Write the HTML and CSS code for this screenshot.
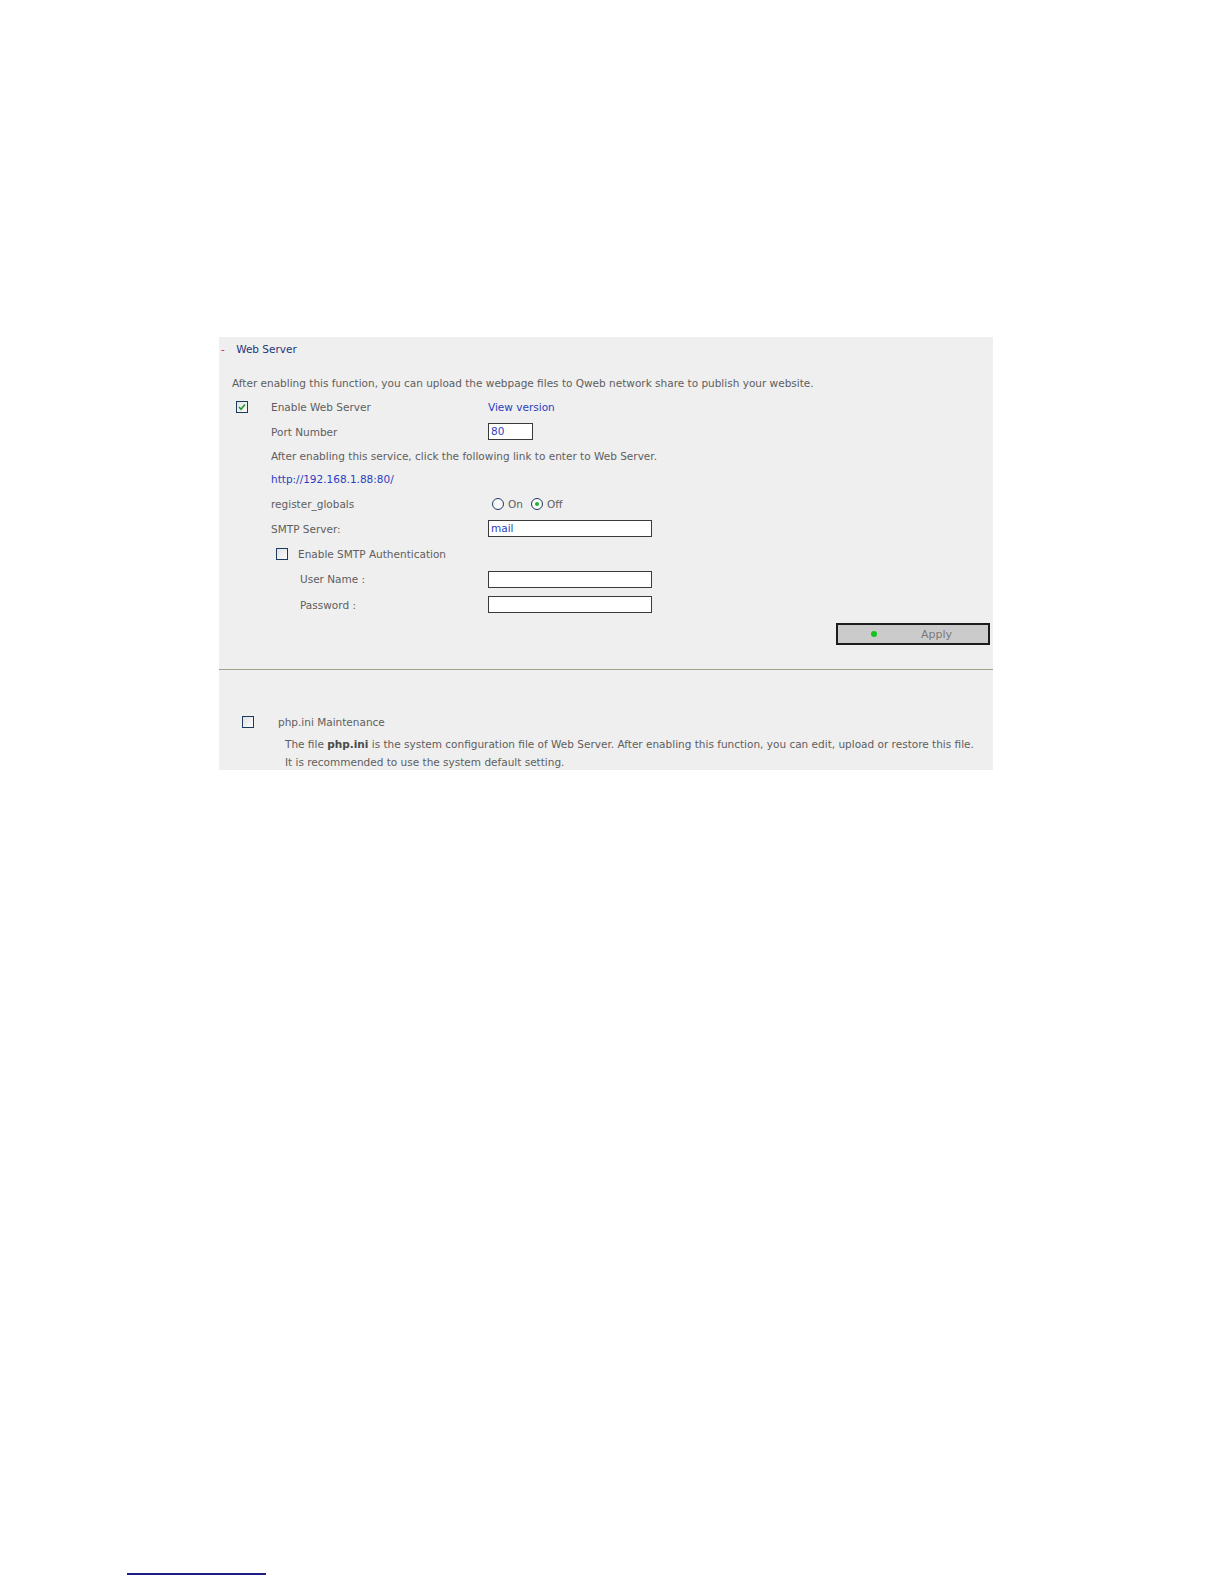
FILE: index.html
```html
<!DOCTYPE html>
<html lang="en">
<head>
    <meta charset="UTF-8">
    <title>Web Server</title>
    <link rel="stylesheet" href="styles.css">
</head>
<body>
    <div class="page">
        <div class="panel">
            <div class="title"><span class="dash">-</span> Web Server</div>
            <div class="intro">After enabling this function, you can upload the webpage files to Qweb network share to publish your website.</div>

            <div class="form">
                <div class="row h24">
                    <span class="check"><svg width="8" height="8" viewBox="0 0 8 8"><path d="M1 4 L3 6.2 L7 1.5" fill="none" stroke="#1f9a2a" stroke-width="1.6"/></svg></span>
                    <span class="label">Enable Web Server</span>
                    <a class="link">View version</a>
                </div>
                <div class="row h25">
                    <span></span>
                    <span class="label">Port Number</span>
                    <span class="input short">80</span>
                </div>
                <div class="row h23">
                    <span></span>
                    <span class="label wide">After enabling this service, click the following link to enter to Web Server.</span>
                </div>
                <div class="row h24">
                    <span></span>
                    <a class="link wide">http://192.168.1.88:80/</a>
                </div>
                <div class="row h25">
                    <span></span>
                    <span class="label">register_globals</span>
                    <span class="radios">
                        <span class="radio"></span><span class="opt">On</span>
                        <span class="radio on"></span><span class="opt">Off</span>
                    </span>
                </div>
                <div class="row h25">
                    <span></span>
                    <span class="label">SMTP Server:</span>
                    <span class="input">mail</span>
                </div>
                <div class="row h25 sub">
                    <span class="check"></span>
                    <span class="label">Enable SMTP Authentication</span>
                </div>
                <div class="row h26 sub2">
                    <span class="label">User Name :</span>
                    <span class="input"></span>
                </div>
                <div class="row h25 sub2">
                    <span class="label">Password :</span>
                    <span class="input"></span>
                </div>
            </div>

            <div class="actions">
                <button class="apply"><span class="dot"></span><span class="apply-text">Apply</span></button>
            </div>

            <div class="php">
                <div class="php-head">
                    <span class="check"></span>
                    <span class="label">php.ini Maintenance</span>
                </div>
                <div class="php-desc">
                    <div>The file <b>php.ini</b> is the system configuration file of Web Server. After enabling this function, you can edit, upload or restore this file.</div>
                    <div>It is recommended to use the system default setting.</div>
                </div>
            </div>
        </div>

        <div class="footnote"></div>
    </div>
</body>
</html>
```

FILE: styles.css
```css
html, body {
    margin: 0;
    padding: 0;
    overflow: hidden;
}

body {
    background: #ffffff;
    font-family: 'DejaVu Sans', Tahoma, sans-serif;
    font-size: 10.5px;
    color: #5e5e5e;
}

.page {
    height: 1584px;
    overflow: hidden;
    padding-top: 337px;
    box-sizing: border-box;
}

.panel {
    margin-left: 219px;
    width: 774px;
    height: 433px;
    background: #efefef;
    overflow: hidden;
}

.title {
    height: 24px;
    line-height: 24px;
    padding-left: 2px;
    color: #25357a;
    font-size: 10.5px;
}

.dash {
    color: #d0202a;
    margin-right: 8px;
}

.intro {
    margin-top: 10px;
    height: 24px;
    line-height: 24px;
    padding-left: 13px;
}

.form {
    padding-left: 17px;
}

.row {
    display: grid;
    grid-template-columns: 35px 217px auto;
    align-items: center;
}

.h23 { height: 23px; }
.h24 { height: 24px; }
.h25 { height: 25px; }
.h26 { height: 26px; }

.row.sub {
    grid-template-columns: 22px auto;
    padding-left: 40px;
}

.row.sub2 {
    grid-template-columns: 188px auto;
    padding-left: 64px;
}

.wide {
    grid-column: 2 / 4;
}

.link {
    color: #2a3fc0;
    text-decoration: none;
}

.check {
    width: 10px;
    height: 10px;
    border: 1px solid #1d3b5e;
    background: linear-gradient(135deg, #e2e2e2, #fbfbfb);
    display: inline-flex;
    align-items: center;
    justify-content: center;
}

.input {
    display: inline-block;
    box-sizing: border-box;
    width: 164px;
    height: 17px;
    line-height: 15px;
    border: 1px solid #3a3a3a;
    background: #fff;
    color: #2a3fc0;
    padding-left: 2px;
}

.input.short {
    width: 45px;
}

.radios {
    display: flex;
    align-items: center;
    padding-left: 4px;
}

.radio {
    box-sizing: border-box;
    width: 12px;
    height: 12px;
    border: 1px solid #1d3b5e;
    border-radius: 50%;
    background: #fafafa;
    display: inline-flex;
    align-items: center;
    justify-content: center;
}

.radio.on::after {
    content: "";
    width: 4px;
    height: 4px;
    border-radius: 50%;
    background: #23b02a;
}

.opt {
    margin: 0 8px 0 4px;
}

.actions {
    display: flex;
    justify-content: flex-end;
    padding: 6px 3px 24px 0;
    border-bottom: 1px solid #a2a28c;
}

.apply {
    width: 154px;
    height: 22px;
    border: 2px solid #1c1c1c;
    background: #cbcbcb;
    display: flex;
    align-items: center;
    padding: 0;
    font-family: 'DejaVu Sans', Tahoma, sans-serif;
    font-size: 11px;
    color: #7a7a7a;
}

.dot {
    width: 6px;
    height: 6px;
    border-radius: 50%;
    background: #12c41c;
    margin-left: 33px;
}

.apply-text {
    margin-left: 44px;
}

.php {
    padding: 46px 0 0 23px;
}

.php-head {
    display: flex;
    align-items: center;
    height: 12px;
}

.php-head .label {
    margin-left: 24px;
}

.php-desc {
    margin-top: 7px;
    padding-left: 43px;
    line-height: 18px;
    white-space: nowrap;
}

.php-desc b {
    color: #4a4a4a;
}

.footnote {
    margin: 803px 0 0 127px;
    width: 139px;
    border-top: 2px solid #1d1d8a;
}
```
